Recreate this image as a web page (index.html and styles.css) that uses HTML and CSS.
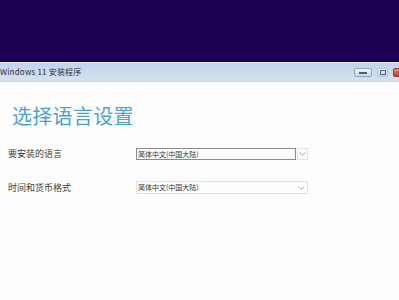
FILE: index.html
```html
<!DOCTYPE html>
<html lang="zh-CN">
<head>
<meta charset="utf-8">
<link rel="stylesheet" href="styles.css">
</head>
<body>
<div class="desk"></div>
<div class="window">
  <div class="titlebar">
    <span class="title">Windows 11 安装程序</span>
    <div class="controls">
      <span class="btn min"><i></i></span>
      <span class="btn max"><i></i></span>
      <span class="btn close"></span>
    </div>
  </div>
  <div class="content">
    <h1 class="heading">选择语言设置</h1>
    <div class="form">
      <div class="row">
        <span class="label">要安装的语言</span>
        <div class="combo focused">
          <span class="field">简体中文(中国大陆)</span>
          <span class="arrow"><svg width="7" height="4" viewBox="0 0 7 4"><path d="M0.5 0.5 L3.5 3.2 L6.5 0.5" fill="none" stroke="#9aa0a8" stroke-width="0.9"/></svg></span>
        </div>
      </div>
      <div class="row">
        <span class="label">时间和货币格式</span>
        <div class="combo">
          <span class="field">简体中文(中国大陆)</span>
          <span class="arrow"><svg width="7" height="4" viewBox="0 0 7 4"><path d="M0.5 0.5 L3.5 3.2 L6.5 0.5" fill="none" stroke="#9aa0a8" stroke-width="0.9"/></svg></span>
        </div>
      </div>
    </div>
  </div>
</div>
</body>
</html>
```
FILE: styles.css
```css
* { box-sizing: border-box; }
html, body { margin: 0; padding: 0; }
body {
  width: 399px;
  height: 300px;
  overflow: hidden;
  background: #ffffff;
  font-family: "Noto Sans CJK SC", "Noto Sans", sans-serif;
  color: #333;
}
.desk {
  height: 62px;
  background: #1b0053;
}
.window {
  background: #fdfdfd;
  height: 238px;
}
.titlebar {
  height: 20px;
  border-top: 1px solid #e6eef8;
  background: linear-gradient(#c2d3ea, #cfdcee 60%, #d6e1f0);
  border-bottom: 1px solid #c9d6e6;
  display: flex;
  align-items: center;
  justify-content: space-between;
}
.title {
  font-size: 8px;
  line-height: 1;
  color: #2a2f3a;
  margin-left: 0;
  letter-spacing: 0.2px;
}
.controls {
  display: flex;
  align-items: center;
  gap: 5px;
  margin-right: -6px;
}
.btn {
  display: flex;
  align-items: center;
  justify-content: center;
  height: 9px;
  border: 1px solid #8ea4c0;
  border-radius: 2px;
  background: linear-gradient(#eef3fa, #c9d7ea);
}
.btn.min { width: 18px; margin-left: -2px; }
.btn.min i { width: 8px; height: 2px; background: #555c66; margin-top: 2px; }
.btn.max { width: 11px; border-color: #b8c6d8; background: linear-gradient(#e4ebf5, #ccd8e9); }
.btn.max i { width: 6px; height: 5px; border: 1px solid #5a6270; }
.btn.close { width: 12px; background: linear-gradient(#e98a7a, #c7382a); border-color: #9a3a30; }
.content {
  padding: 22px 0 0 12px;
}
.heading {
  margin: 0;
  font-size: 20px;
  line-height: 24px;
  font-weight: 400;
  color: #4aa2d8;
  letter-spacing: 0.3px;
}
.form {
  margin-top: 20px;
  margin-left: -4px;
  display: flex;
  flex-direction: column;
  gap: 21px;
}
.row {
  display: grid;
  grid-template-columns: 128px auto;
  align-items: center;
}
.label {
  font-size: 9px;
  line-height: 12px;
  color: #3a3a3a;
}
.combo {
  display: flex;
  align-items: stretch;
  height: 12px;
  width: 172px;
}
.field {
  flex: 1;
  font-size: 7px;
  line-height: 10px;
  padding-left: 1px;
  color: #333;
  border: 1px solid #e0e0e0;
  white-space: nowrap;
}
.combo.focused .field {
  border-color: #8a8a8a;
  flex: 0 0 160px;
}
.arrow {
  width: 11px;
  display: flex;
  align-items: center;
  justify-content: center;
}
.combo.focused .arrow {
  border: 1px solid #e2e2e2;
  margin-left: 1px;
  width: 11px;
}
.combo:not(.focused) {
  border: 1px solid #e0e0e0;
  height: 13px;
}
.combo:not(.focused) .field { border: none; }
```
